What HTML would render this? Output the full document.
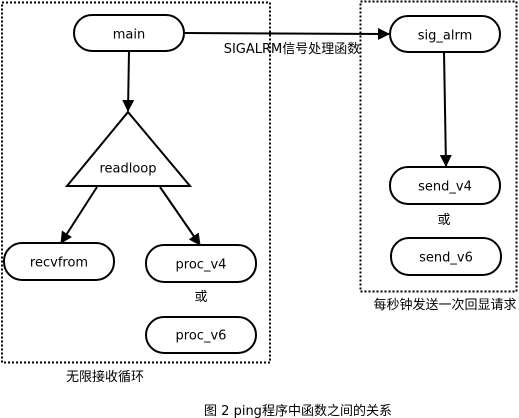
<!DOCTYPE html>
<html><head><meta charset="utf-8"><style>
html,body{margin:0;padding:0;background:#fff;width:519px;height:418px;overflow:hidden}
svg text{font-family:"DejaVu Sans","Noto Sans CJK SC",sans-serif;font-size:13px;fill:#000}
</style></head><body>
<svg width="519" height="418" viewBox="0 0 519 418" xmlns="http://www.w3.org/2000/svg">
<defs><marker id="a" markerWidth="12" markerHeight="12" refX="11" refY="6" orient="auto" markerUnits="userSpaceOnUse"><path d="M0,0 L12,6 L0,12 z" fill="#000"/></marker></defs>
<g fill="none" stroke="#000" stroke-width="2" stroke-dasharray="2,2">
<rect x="2" y="2.5" width="268" height="360"/>
<rect x="360.5" y="1.5" width="156" height="290"/>
</g>
<g fill="#fff" stroke="#000" stroke-width="2">
<rect x="74" y="15" width="110" height="36" rx="18"/>
<rect x="390" y="16" width="110" height="36" rx="18"/>
<rect x="4" y="243" width="110" height="37" rx="18"/>
<rect x="146" y="245" width="110" height="37" rx="18"/>
<rect x="146" y="317" width="110" height="36" rx="18"/>
<rect x="390" y="167" width="110" height="37" rx="18"/>
<rect x="391" y="238" width="110" height="37" rx="18"/>
<path d="M128,112 L190,186 L67,186 Z"/>
</g>
<g stroke="#000" stroke-width="2" fill="none">
<line x1="184" y1="33" x2="389" y2="34" marker-end="url(#a)"/>
<line x1="129" y1="51" x2="128" y2="111" marker-end="url(#a)"/>
<line x1="97" y1="187" x2="61" y2="243" marker-end="url(#a)"/>
<line x1="160" y1="187" x2="200" y2="245" marker-end="url(#a)"/>
<line x1="444" y1="52" x2="446" y2="166" marker-end="url(#a)"/>
</g>
<g text-anchor="middle">
<text x="129" y="38.5">main</text>
<text x="445" y="39.5">sig_alrm</text>
<text x="128" y="172.5">readloop</text>
<text x="59" y="266.5">recvfrom</text>
<text x="201" y="268.5">proc_v4</text>
<text x="201" y="301">或</text>
<text x="201" y="339.5">proc_v6</text>
<text x="445" y="190.5">send_v4</text>
<text x="444" y="224">或</text>
<text x="446" y="261.5">send_v6</text>
<text x="292" y="53">SIGALRM信号处理函数</text>
<text x="445" y="309">每秒钟发送一次回显请求</text>
<text x="105" y="381">无限接收循环</text>
<text x="298" y="415">图 2 ping程序中函数之间的关系</text>
</g>
</svg>
</body></html>
